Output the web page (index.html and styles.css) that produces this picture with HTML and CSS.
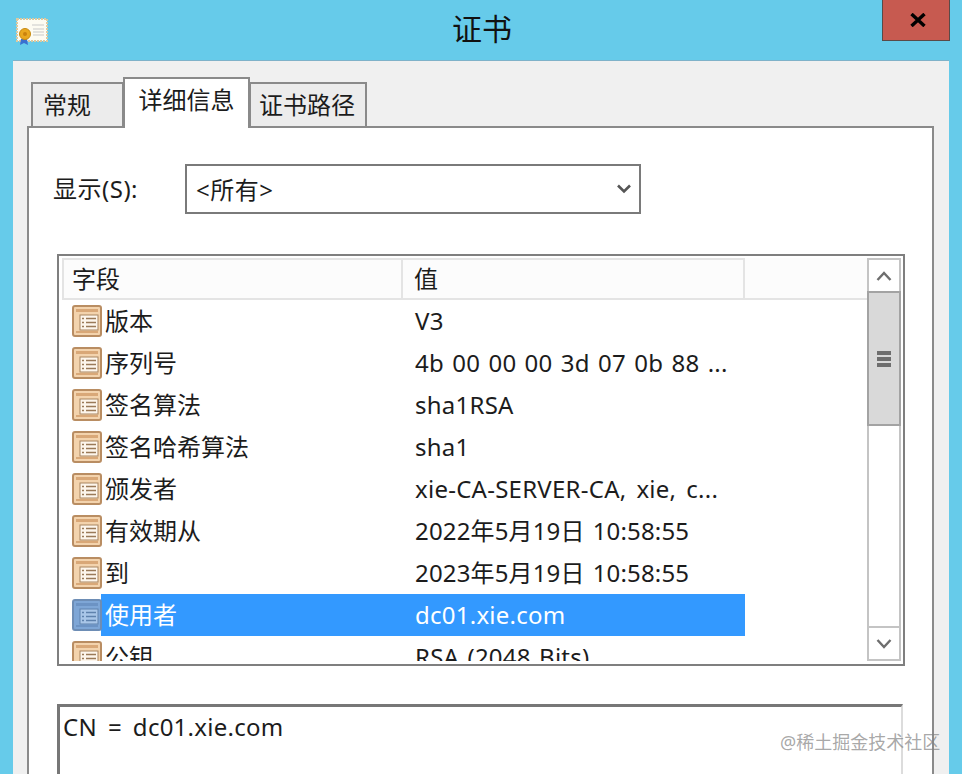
FILE: index.html
```html
<!DOCTYPE html>
<html lang="zh">
<head>
<meta charset="utf-8">
<title>证书</title>
<link rel="stylesheet" href="styles.css">
</head>
<body>
<svg class="defs" width="0" height="0" aria-hidden="true">
  <symbol id="field" viewBox="0 0 30 32">
    <rect x="1" y="1" width="28" height="30" rx="2" fill="#f3d3ad" stroke="#b98d62" stroke-width="2"/>
    <rect x="4" y="4" width="22" height="3" fill="#d9a878"/>
    <rect x="4" y="26" width="22" height="2" fill="#d9a878"/>
    <rect x="8" y="10" width="18" height="15" fill="#fdf6ec" stroke="#a98560"/>
    <path d="M10 13.500h2M14 13.500h10M10 17.500h2M14 17.500h10M10 21.500h2M14 21.500h10" stroke="#9a7a58" stroke-width="1.500"/>
  </symbol>
  <symbol id="field-sel" viewBox="0 0 30 32">
    <rect x="1" y="1" width="28" height="30" rx="2" fill="#7ea6d6" stroke="#6d8db5" stroke-width="2"/>
    <rect x="4" y="4" width="22" height="3" fill="#6c93c4"/>
    <rect x="4" y="26" width="22" height="2" fill="#6c93c4"/>
    <rect x="8" y="10" width="18" height="15" fill="#a9c6e8" stroke="#5f82ad"/>
    <path d="M10 13.500h2M14 13.500h10M10 17.500h2M14 17.500h10M10 21.500h2M14 21.500h10" stroke="#5f82ad" stroke-width="1.500"/>
  </symbol>
</svg>
<div class="window">
  <header class="titlebar">
    <svg class="cert-icon" viewBox="0 0 32 28" aria-hidden="true">
      <rect x="1" y="1" width="30" height="22" fill="#fdfbf2" stroke="#dcc9a0" stroke-width="2" stroke-dasharray="2 1"/>
      <path d="M16 7h12M17 11h11M17 14h11M17 17h11" stroke="#c9c9c9" stroke-width="1"/>
      <path d="M5 21l-1 6 4-2 4 2-1-6z" fill="#3a6fd0"/>
      <circle cx="9" cy="16" r="5.500" fill="#e9a81f" stroke="#c88a10"/>
      <circle cx="9" cy="16" r="2" fill="#c9820e"/>
    </svg>
    <h1 class="title">证书</h1>
    <button class="close" type="button" aria-label="关闭">
      <svg viewBox="0 0 16 14" aria-hidden="true"><path d="M1.500 1l13 12M14.500 1l-13 12" stroke="#000" stroke-width="3.400" fill="none"/></svg>
    </button>
  </header>
  <main class="dialog">
    <nav class="tabs">
      <div class="tab first">常规</div>
      <div class="tab active">详细信息</div>
      <div class="tab last">证书路径</div>
    </nav>
    <section class="page">
      <div class="show-row">
        <label class="show-label">显示(S):</label>
        <div class="select">
          <span>&lt;所有&gt;</span>
          <svg class="select-arrow" viewBox="0 0 14 10" aria-hidden="true"><path d="M1 1.500l6 6 6-6" stroke="#555" stroke-width="2.600" fill="none"/></svg>
        </div>
      </div>
      <div class="list">
        <div class="list-body">
          <div class="list-head">
            <div class="head-cell name">字段</div>
            <div class="head-cell value">值</div>
          </div>
          <div class="rows">
            <div class="row"><svg class="ficon"><use href="#field"/></svg><div class="cell-name">版本</div><div class="cell-value">V3</div></div>
            <div class="row"><svg class="ficon"><use href="#field"/></svg><div class="cell-name">序列号</div><div class="cell-value">4b 00 00 00 3d 07 0b 88 ...</div></div>
            <div class="row"><svg class="ficon"><use href="#field"/></svg><div class="cell-name">签名算法</div><div class="cell-value">sha1RSA</div></div>
            <div class="row"><svg class="ficon"><use href="#field"/></svg><div class="cell-name">签名哈希算法</div><div class="cell-value">sha1</div></div>
            <div class="row"><svg class="ficon"><use href="#field"/></svg><div class="cell-name">颁发者</div><div class="cell-value wide">xie-CA-SERVER-CA, xie, c...</div></div>
            <div class="row"><svg class="ficon"><use href="#field"/></svg><div class="cell-name">有效期从</div><div class="cell-value date">2022年5月19日 10:58:55</div></div>
            <div class="row"><svg class="ficon"><use href="#field"/></svg><div class="cell-name">到</div><div class="cell-value date">2023年5月19日 10:58:55</div></div>
            <div class="row selected"><svg class="ficon"><use href="#field-sel"/></svg><div class="cell-name">使用者</div><div class="cell-value">dc01.xie.com</div></div>
            <div class="row"><svg class="ficon"><use href="#field"/></svg><div class="cell-name">公钥</div><div class="cell-value">RSA (2048 Bits)</div></div>
          </div>
        </div>
        <div class="scrollbar">
          <div class="sb-btn up"><svg viewBox="0 0 16 12" aria-hidden="true"><path d="M1.500 10l6.500-7 6.500 7" stroke="#6e6e6e" stroke-width="2.400" fill="none"/></svg></div>
          <div class="sb-thumb"><i></i><i></i><i></i></div>
          <div class="sb-track"></div>
          <div class="sb-btn down"><svg viewBox="0 0 16 12" aria-hidden="true"><path d="M1.500 2l6.500 7 6.500-7" stroke="#6e6e6e" stroke-width="2.400" fill="none"/></svg></div>
        </div>
      </div>
      <div class="detail">CN = dc01.xie.com</div>
    </section>
  </main>
  <div class="watermark">@稀土掘金技术社区</div>
</div>
</body>
</html>
```
FILE: styles.css
```css
* { box-sizing: border-box; }
html, body { margin: 0; padding: 0; }
body {
  width: 962px;
  height: 774px;
  overflow: hidden;
  font-family: "Noto Sans", "Noto Sans CJK SC", sans-serif;
  font-size: 24px;
  color: #1c1c1c;
  background: #66cbea;
}
.defs { position: absolute; }
.window { position: relative; height: 774px; overflow: hidden; display: flex; flex-direction: column; }

.titlebar {
  height: 60px;
  flex: none;
  display: grid;
  grid-template-columns: 1fr auto 1fr;
  align-items: start;
  padding: 0 12px 0 16px;
}
.cert-icon { width: 32px; height: 28px; margin-top: 18px; }
.title { margin: 13px 0 0; font-size: 30px; font-weight: 400; line-height: 32px; color: #111; transform: translateX(-1px); }
.close {
  justify-self: end;
  width: 68px;
  height: 41px;
  padding: 0 0 0 3px;
  border: 1px solid #5a4a48;
  border-top: 0;
  background: #c75a50;
  display: flex;
  align-items: center;
  justify-content: center;
}
.close svg { width: 16px; height: 14px; }

.dialog {
  flex: 1;
  margin: 0 13px;
  width: 936px;
  background: #f0f0f0;
  border-top: 1px solid #7fb2c9;
  padding: 17px 15px 0 14px;
  display: flex;
  flex-direction: column;
}
.tabs { display: flex; align-items: flex-end; padding-left: 4px; position: relative; z-index: 1; height: 50px; margin-bottom: -2px; }
.tab {
  height: 46px;
  border: 2px solid #8a8a8a;
  background: #ececec;
  font-size: 24px;
  line-height: 41px;
  text-align: center;
}
.tab.first { width: 93px; padding-right: 21px; }
.tab.active {
  width: 127px;
  height: 51px;
  margin: 0 -1px 0 -1px;
  background: #fff;
  border-bottom: 0;
  line-height: 42px;
  position: relative;
  z-index: 2;
}
.tab.last { width: 118px; padding-right: 2px; }

.page {
  flex: 1;
  background: #fff;
  border: 2px solid #8a8a8a;
  border-bottom: 0;
  padding: 36px 28px 0 28px;
}
.show-row { display: flex; align-items: center; gap: 47px; margin-left: -4px; }
.show-label { width: 85px; line-height: 32px; font-size: 24px; letter-spacing: 0.5px; white-space: nowrap; }
.select {
  width: 456px;
  height: 50px;
  border: 2px solid #7a7a7a;
  display: flex;
  align-items: center;
  justify-content: space-between;
  padding: 0 8px 2px 9px;
  font-size: 24px;
  letter-spacing: 0.5px;
}
.select-arrow { width: 14px; height: 10px; margin-top: 2px; }

.list {
  margin-top: 40px;
  width: 848px;
  height: 412px;
  border: 2px solid #7f7f7f;
  padding: 2px 2px 3px 3px;
  display: flex;
}
.list-body { width: 805px; flex: none; overflow: hidden; }
.list-head { display: flex; height: 42px; background: #fcfcfc; border-bottom: 2px solid #e4e4e4; }
.head-cell { line-height: 38px; padding-left: 8px; flex: none; border-top: 2px solid #e4e4e4; }
.head-cell.name { width: 341px; border-left: 2px solid #e4e4e4; border-right: 2px solid #e4e4e4; }
.head-cell.value { width: 342px; border-right: 2px solid #e4e4e4; padding-left: 11px; }

.rows { height: 361px; overflow: hidden; }
.row { display: flex; align-items: center; height: 42px; position: relative; }
.ficon { width: 30px; height: 32px; margin-left: 10px; flex: none; position: relative; z-index: 1; }
.cell-name { width: 314px; margin-left: -1px; padding-left: 4px; line-height: 42px; flex: none; }
.cell-value { width: 330px; line-height: 42px; flex: none; letter-spacing: 0.25px; word-spacing: 1.75px; white-space: nowrap; }
.cell-value.wide { word-spacing: 3.5px; }
.cell-value.date { letter-spacing: 0.15px; }
.row.selected { color: #fff; }
.row.selected .cell-name, .row.selected .cell-value { background: #3399ff; }

.scrollbar {
  width: 34px;
  flex: none;
  display: flex;
  flex-direction: column;
  border: 2px solid #c4c4c4;
}
.sb-btn { height: 31px; flex: none; display: flex; align-items: center; justify-content: center; background: #fff; }
.sb-btn svg { width: 16px; height: 12px; }
.sb-btn.down { border-top: 2px solid #c4c4c4; height: 33px; }
.sb-thumb {
  height: 135px;
  flex: none;
  margin: 0 -2px;
  background: #d9d9d9;
  border: 2px solid #a3a3a3;
  display: flex;
  flex-direction: column;
  align-items: center;
  justify-content: center;
  gap: 2px;
}
.sb-thumb i { display: block; width: 14px; height: 4px; background: #6e6e6e; }
.sb-track { flex: 1; }

.detail {
  margin-top: 38px;
  width: 846px;
  height: 100px;
  border-top: 3px solid #777;
  border-left: 3px solid #777;
  border-right: 2px solid #dcdcdc;
  padding: 2px 0 0 3px;
  line-height: 36px;
  letter-spacing: 0.25px;
  word-spacing: 4.5px;
}
.watermark {
  position: absolute;
  left: 780px;
  top: 731px;
  font-size: 18px;
  line-height: 22px;
  color: rgba(130, 130, 130, 0.7);
}
```
